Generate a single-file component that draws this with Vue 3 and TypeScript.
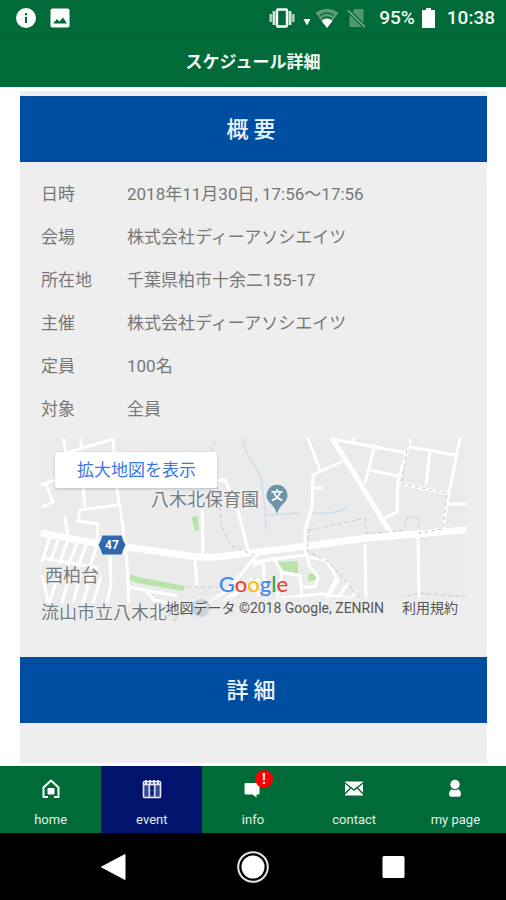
<script setup lang="ts">
interface Detail {
  label: string
  value: string
}

interface Tab {
  id: 'home' | 'event' | 'info' | 'contact' | 'mypage'
  label: string
  badge?: string
}

const details: Detail[] = [
  { label: '日時', value: '2018年11月30日, 17:56〜17:56' },
  { label: '会場', value: '株式会社ディーアソシエイツ' },
  { label: '所在地', value: '千葉県柏市十余二155-17' },
  { label: '主催', value: '株式会社ディーアソシエイツ' },
  { label: '定員', value: '100名' },
  { label: '対象', value: '全員' },
]

const tabs: Tab[] = [
  { id: 'home', label: 'home' },
  { id: 'event', label: 'event' },
  { id: 'info', label: 'info', badge: '!' },
  { id: 'contact', label: 'contact' },
  { id: 'mypage', label: 'my page' },
]

const activeTab: Tab['id'] = 'event'
</script>

<template>
  <div class="screen">
    <div class="status">
      <div class="status-group">
        <svg class="icon-20" viewBox="0 0 20 20" aria-hidden="true">
          <circle cx="10" cy="10" r="10" fill="#fff" />
          <path d="M9 5h2v2.200H9zM9 8.800h2V15H9z" fill="#006b38" />
        </svg>
        <svg class="icon-20" viewBox="0 0 20 20" aria-hidden="true">
          <rect x="0.500" y="0.500" width="19" height="19" rx="2" fill="#fff" />
          <path d="M3 15.500 7 11l2.500 2.500 3.500-4 4 6z" fill="#006b38" />
        </svg>
      </div>
      <div class="status-group status-right">
        <svg class="vibrate" viewBox="0 0 26 20" aria-hidden="true">
          <rect x="8" y="1.500" width="10" height="17" rx="1" fill="none" stroke="#fff" stroke-width="2.400" />
          <path d="M5 3v14M21 3v14" stroke="#d5e7dc" stroke-width="2.800" />
          <path d="M1.800 6v8M24.200 6v8" stroke="#a9cdb8" stroke-width="2.800" />
        </svg>
        <svg class="caret" viewBox="0 0 8 20" aria-hidden="true">
          <path d="M0.500 11h7L4 17.500z" fill="#fff" />
        </svg>
        <svg class="wifi" viewBox="0 0 24 20" aria-hidden="true">
          <path d="M12 20 0.500 4.800Q12-3.500 23.500 4.800z" fill="#5b9d78" />
          <path d="M5 7.500Q12 2.500 19 7.500M7 11Q12 7 17 11" fill="none" stroke="#006b38" stroke-width="1.400" />
          <path d="M12 20 6.500 12.700Q12 9 17.500 12.700z" fill="#fff" />
        </svg>
        <svg class="sim" viewBox="0 0 20 20" aria-hidden="true">
          <path d="M8 1h8.500v18h-14V7z" fill="#4f9770" />
          <path d="M1 2.500 18 19" stroke="#006b38" stroke-width="4" />
          <path d="M1 2.500 18 19" stroke="#82b599" stroke-width="1.500" />
        </svg>
        <span class="status-text">95%</span>
        <svg class="battery" viewBox="0 0 13 20" aria-hidden="true">
          <path d="M4 0h5v2h4v18H0V2h4z" fill="#fff" />
        </svg>
        <span class="status-text">10:38</span>
      </div>
    </div>

    <header class="title-bar">
      <h1>スケジュール詳細</h1>
    </header>

    <main class="content">
      <section class="card">
        <h2>概要</h2>
        <table class="details">
          <tbody>
            <tr v-for="row in details" :key="row.label">
              <th scope="row">{{ row.label }}</th>
              <td>{{ row.value }}</td>
            </tr>
          </tbody>
        </table>

        <div class="map">
          <svg class="map-canvas" viewBox="0 0 425 183" role="img" aria-label="地図">
            <rect width="425" height="183" fill="#ebebeb" />
            <g fill="#b8e3ab">
              <path d="M89 136l8 3 47 9-2 5-46-8-7-3z" />
              <path d="M150 79l7-1 1 14-4 1-2-8z" />
              <path d="M236 124l21-1v12l-18-2z" />
              <path d="M267 137l4-2 5 2-1 5-8 1z" />
            </g>
            <g fill="none" stroke="#cbe0ec" stroke-width="1.500">
              <path d="M202 0q2 14 8 22t11 23l3 27 1 20" />
              <path d="M226 77l33-2M272 75h17l17-4" />
            </g>
            <g fill="none" stroke="#fff" stroke-width="3" stroke-linejoin="round">
              <path d="M22 0l3 15 47-14M39 0l2 9M72 0l4 52 5 30 5 43 2 40" />
              <path d="M0 47l14-5M5 46l7 18-11 5" />
              <path d="M42 50l2 19M77 67l-38 5-2 11 20 3-1 17M24 79l3 20" />
              <path d="M3 120l54 10M69 115l1 32-4 18M88 149l48 9M104 152l9 10 20 4" />
              <path d="M9 98L1 124M18 100l-9 24M27 102l-9 24M37 103l-10 25M46 104l-9 25M56 106l-8 26M1 137l6 27M20 130L8 165M30 132l-9 33M40 134l-8 31M50 136l-8 29M60 139l-8 26" />
              <path d="M161 65l1 52M154 122l2 27M196 69l11 43M166 43l18-1 12 27" />
              <path d="M169 163l18-11 29-35M182 162l24-14M188 161l30-20" />
              <path d="M267 0l12 32M302 23l-30 14-1 32-7 23v20l5 17 8 10-3 10h-15M272 50h10" />
              <path d="M291 1l75 14M313 0v5M334 6l-10 39M329 32l32 7M369 0v4l-12 38-1 32-12 6" />
              <path d="M369 9l45 8M389 13l-4 34M419 0l-13 65-4 27M359 46l47 9M407 66h18" />
              <path d="M324 106l1 55M377 99l1 62" />
              <path d="M212 124l52-7M232 119l9 15 18 4 2 22M222 124l3 31M209 140l9 18M241 134l-5 28M212 128l10-4" />
              <path d="M266 119l18 3 12 17-10 20M298 141l-12 20M307 145l-10 15M316 152l-7 10" />
              <path d="M240 160l40-4 30 4" />
            </g>
            <path d="M291 0l60 97" stroke="#fff" stroke-width="5" />
            <path d="M0 95l59 11 27 3 63 9q15 2 27 1l33-4 57-7 60-8 99-8" fill="none" stroke="#fff" stroke-width="7" />
            <g fill="none" stroke="#c9c9c9" stroke-width="1" stroke-dasharray="4 3">
              <path d="M174 3l-4 10M176 48l5 41 8 18 26 11M146 149h31" />
              <path d="M269 92l55-12 2 16 36-4 5-13h10l1 16 24-4 4-36-46-9 8-45" />
              <path d="M268 91l-2 22 23 12 32 37M359 160l20-5 46 4" />
            </g>
            <path d="M61 97h20q1 5 4 10-3 5-4 10H61q-1-5-4-10 3-5 4-10z" fill="#3068b0" stroke="#e9eef5" />
            <text class="marker-text" x="71" y="111" text-anchor="middle">47</text>
            <path d="M236 76q-2-7-7-11a10.500 10.500 0 1 1 14 0q-5 4-7 11z" fill="#6d94a8" />
            <text class="marker-text" x="236" y="62" text-anchor="middle">文</text>
            <g class="place">
              <text x="110" y="68">八木北保育園</text>
              <text x="4" y="144">西柏台</text>
              <text x="0" y="181">流山市立八木北</text>
            </g>
            <text class="place faded" x="126" y="181">小</text>
            <circle cx="160" cy="170" r="9" fill="#a9bbc5" />
            <path d="M155 167h10" stroke="#dfe6ea" stroke-width="3" stroke-linecap="round" />
          </svg>
          <a class="map-link" href="#map">拡大地図を表示</a>
          <div class="map-footer">
            <a class="google" href="#google" aria-label="Google"><span class="g-blue">G</span><span class="g-red">o</span><span class="g-yellow">o</span><span class="g-blue">g</span><span class="g-green">l</span><span class="g-red">e</span></a>
            <div class="credits">
              <span>地図データ ©2018 Google, ZENRIN</span>
              <a href="#terms">利用規約</a>
            </div>
          </div>
        </div>

        <h2>詳細</h2>
        <div class="card-end"></div>
      </section>
    </main>

    <nav class="tabs">
      <a
        v-for="tab in tabs"
        :key="tab.id"
        class="tab"
        :class="{ active: tab.id === activeTab }"
        :href="'#' + tab.id"
      >
        <span class="tab-icon">
          <svg v-if="tab.id === 'home'" viewBox="0 0 20 20" aria-hidden="true">
            <path d="M7 18H2.500V8.500L10 1.500l7.500 7V18H13" fill="none" stroke="#fff" stroke-width="2" stroke-linejoin="round" />
            <rect x="6.500" y="9" width="7" height="6.500" rx="1" fill="#fff" />
          </svg>
          <svg v-else-if="tab.id === 'event'" viewBox="0 0 20 20" aria-hidden="true">
            <rect x="1.500" y="2.500" width="17" height="16" rx="1" fill="#3b4a90" stroke="#e4e7f3" stroke-width="1.600" />
            <path d="M4.200 1v4M8 1v4M12 1v4M15.800 1v4" stroke="#fff" stroke-width="1.600" />
            <path d="M7.200 6v12M12.800 6v12M2 5.500h16" stroke="#e4e7f3" stroke-width="1.400" />
            <path d="M10 7v10" stroke="#00146e" stroke-width="2" stroke-dasharray="4 1" />
          </svg>
          <svg v-else-if="tab.id === 'info'" viewBox="0 0 20 20" aria-hidden="true">
            <path d="M3 4h12q1.500 0 1.500 1.500v8.500q0 1.500-1.500 1.500h-1.500v3l-4-3H3q-1.500 0-1.500-1.500V5.500Q1.500 4 3 4z" fill="#fff" />
          </svg>
          <svg v-else-if="tab.id === 'contact'" viewBox="0 0 20 20" aria-hidden="true">
            <rect x="1" y="2.500" width="18" height="14" fill="#fff" />
            <path d="M1 4l9 7 9-7M1 15l5.500-6M19 15l-5.500-6" fill="none" stroke="#006b38" stroke-width="1.400" />
          </svg>
          <svg v-else viewBox="0 0 20 20" aria-hidden="true">
            <circle cx="10" cy="5.500" r="4.700" fill="#fff" />
            <path d="M6.500 10.300q3.500 2 7 0 2.500 1.500 2.500 4.500 0 3-2.500 3h-7q-2.500 0-2.500-3t2.500-4.500z" fill="#fff" />
          </svg>
          <span v-if="tab.badge" class="badge">{{ tab.badge }}</span>
        </span>
        <span>{{ tab.label }}</span>
      </a>
    </nav>

    <div class="system-nav">
      <button type="button" aria-label="戻る">
        <svg viewBox="0 0 32 32" aria-hidden="true"><path d="M28 3.500v25L4.500 16z" fill="#fff" stroke="#fff" stroke-linejoin="round" /></svg>
      </button>
      <button type="button" aria-label="ホーム">
        <svg viewBox="0 0 32 32" aria-hidden="true">
          <circle cx="16" cy="16" r="14.800" fill="none" stroke="#e6e6e6" stroke-width="2" />
          <circle cx="16" cy="16" r="11.500" fill="#fff" />
        </svg>
      </button>
      <button type="button" aria-label="履歴">
        <svg viewBox="0 0 32 32" aria-hidden="true"><rect x="5.500" y="5" width="22" height="22" rx="1.500" fill="#fff" /></svg>
      </button>
    </div>
  </div>
</template>

<style>
body {
  margin: 0;
  background: #fff;
}
</style>

<style scoped>
.screen {
  display: flex;
  flex-direction: column;
  min-height: 100vh;
  font-family: Roboto, "Noto Sans CJK JP", sans-serif;
  color: #777;
}

svg {
  display: block;
}

.status {
  box-sizing: border-box;
  display: flex;
  align-items: center;
  justify-content: space-between;
  height: 36px;
  padding: 1px 11px 0 16px;
  background: #006b38;
  border-bottom: 1px solid #006130;
}

.status-group {
  display: flex;
  align-items: center;
  gap: 14px;
}

.status-right {
  gap: 0;
}

.icon-20 {
  width: 20px;
  height: 20px;
}

.vibrate {
  width: 26px;
  height: 20px;
  margin-right: 8px;
}

.caret {
  width: 8px;
  height: 20px;
  margin-right: 4px;
}

.wifi {
  width: 24px;
  height: 20px;
  margin-right: 8px;
}

.sim {
  width: 20px;
  height: 20px;
  margin-right: 12px;
}

.battery {
  width: 13px;
  height: 20px;
  margin: 0 12px 0 7px;
}

.status-text {
  font-size: 19px;
  line-height: 24px;
  font-weight: 500;
  color: #f4faf6;
}

.title-bar {
  display: flex;
  align-items: center;
  justify-content: center;
  height: 51px;
  background: #006b38;
}

h1 {
  margin: 0;
  font-size: 17px;
  line-height: 24px;
  font-weight: 700;
  color: #f4faf6;
}

.content {
  display: flex;
  flex: 1;
  padding: 4px 19px 3px 20px;
}

.card {
  display: flex;
  flex-direction: column;
  flex: 1;
  min-width: 0;
  padding-top: 5px;
  background: #eee;
}

h2 {
  margin: 0;
  padding-top: 2px;
  font-size: 22px;
  line-height: 64px;
  font-weight: 500;
  letter-spacing: 5px;
  text-align: center;
  color: #eef4fc;
  background: #004ea2;
}

.details {
  margin: 11px 21px 7px;
  border-collapse: collapse;
  font-size: 17px;
  line-height: 43px;
}

th,
td {
  padding: 0;
  font-weight: 400;
  text-align: left;
}

th {
  width: 86px;
}

.map {
  position: relative;
  margin: 0 21px 36px;
}

.map-canvas {
  width: 100%;
  height: auto;
  overflow: visible;
}

.place {
  font-size: 18px;
  fill: #747d82;
  stroke: #f2f2f2;
  stroke-width: 2px;
  paint-order: stroke;
}

.faded {
  opacity: 0.4;
}

.marker-text {
  font-size: 12px;
  font-weight: 700;
  fill: #fff;
}

.map-link {
  position: absolute;
  top: 14px;
  left: 14px;
  padding: 0 21px 0 22px;
  font-size: 17px;
  line-height: 36px;
  text-decoration: none;
  color: #3b78e7;
  background: #fff;
  border-radius: 2px;
  box-shadow: 0 1px 3px rgba(0, 0, 0, 0.2);
}

.map-footer {
  position: absolute;
  right: 0;
  bottom: 0;
  left: 0;
  display: flex;
  flex-direction: column;
}

.google {
  align-self: center;
  font-family: Lato, sans-serif;
  font-size: 22px;
  line-height: 26px;
  font-weight: 500;
  text-decoration: none;
}

.g-blue {
  color: #4285f4;
}

.g-red {
  color: #ea4335;
}

.g-yellow {
  color: #fbbc05;
}

.g-green {
  color: #34a853;
}

.credits {
  display: flex;
  align-self: flex-end;
  gap: 18px;
  padding: 0 8px 2px 0;
  font-size: 14px;
  line-height: 22px;
  color: #555;
  background: linear-gradient(to right, rgba(238, 238, 238, 0.4), rgba(238, 238, 238, 0.9));
}

.credits a {
  color: inherit;
  text-decoration: none;
}

.card-end {
  flex: 1;
  min-height: 40px;
}

.tabs {
  display: grid;
  grid-template-columns: repeat(5, 1fr);
  height: 67px;
  background: #006b38;
}

.tab {
  display: flex;
  flex-direction: column;
  align-items: center;
  gap: 12px;
  padding-top: 13px;
  font-size: 13px;
  line-height: 18px;
  text-decoration: none;
  color: #e4f0e9;
}

.active {
  background: #00146e;
}

.tab-icon {
  position: relative;
  width: 20px;
  height: 20px;
}

.tab-icon svg {
  width: 20px;
  height: 20px;
}

.badge {
  position: absolute;
  top: -9px;
  left: 12px;
  width: 18px;
  height: 18px;
  border-radius: 50%;
  font-size: 14px;
  line-height: 18px;
  font-weight: 700;
  text-align: center;
  color: #fff;
  background: #fa0000;
}

.system-nav {
  display: flex;
  align-items: center;
  justify-content: center;
  gap: 108px;
  height: 67px;
  background: #000;
}

.system-nav button {
  width: 32px;
  height: 32px;
  padding: 0;
  border: 0;
  background: none;
}
</style>
